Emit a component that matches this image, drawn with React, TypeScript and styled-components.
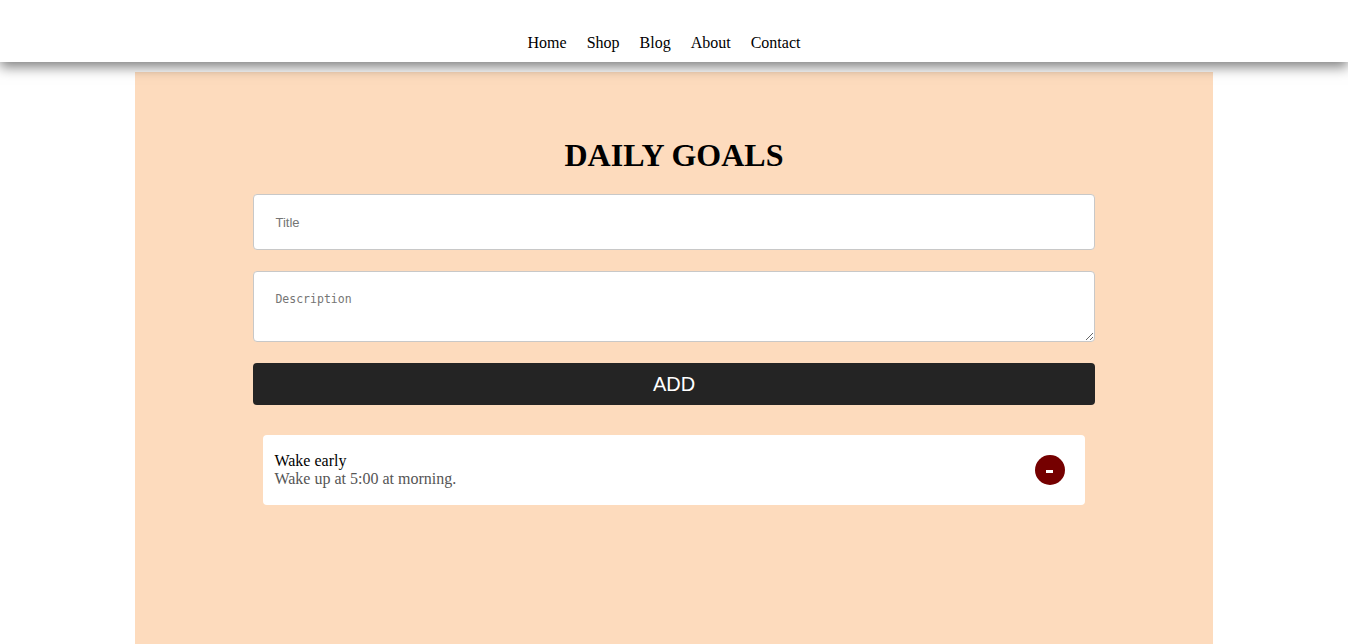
import React from "react";
import styled, { createGlobalStyle } from "styled-components";

const Global = createGlobalStyle`
  html, body { margin: 0; padding: 0; background: #fff; }
  body { font-family: "Liberation Serif", "Times New Roman", serif; font-size: 16px; }
  * { box-sizing: border-box; }
`;

const Header = styled.header`
  position: relative;
  z-index: 2;
  height: 62px;
  background: #fff;
  box-shadow: 0 5px 12px rgba(0, 0, 0, 0.5);
  display: flex;
  justify-content: center;
  padding-top: 34px;
`;

const NavList = styled.ul`
  list-style: none;
  margin: 0;
  padding: 0;
  display: flex;
  height: 18px;
  line-height: 18px;
`;

const NavItem = styled.li`
  margin-right: 20px;
  font-size: 16px;
  color: #000;
`;

const Main = styled.main`
  width: 80%;
  margin: 10px auto 0;
  background: #fddbbd;
  min-height: 572px;
  padding-top: 65px;
`;

const Title = styled.h1`
  margin: 0;
  text-align: center;
  font-size: 32px;
  line-height: 37px;
  font-weight: bold;
`;

const Form = styled.div`
  width: 78%;
  margin: 20px auto 0;
  display: flex;
  flex-direction: column;
  gap: 21px;
`;

const TextInput = styled.input`
  height: 56px;
  border: 1px solid #c8c8c8;
  border-radius: 4px;
  padding: 0 21px;
  font-family: "Liberation Sans", Arial, sans-serif;
  font-size: 13px;
  background: #fff;
  outline: none;
  &::placeholder { color: #757575; }
`;

const TextArea = styled.textarea`
  height: 71px;
  border: 1px solid #c8c8c8;
  border-radius: 4px;
  padding: 20px 21px;
  font-family: "DejaVu Sans Mono", "Liberation Mono", monospace;
  font-size: 11.5px;
  background: #fff;
  outline: none;
  &::placeholder { color: #757575; }
`;

const AddButton = styled.button`
  height: 42px;
  border: none;
  border-radius: 4px;
  background: #242424;
  color: #fff;
  font-family: "Liberation Sans", Arial, sans-serif;
  font-size: 20px;
`;

const Card = styled.div`
  margin: 9px 10px 0;
  height: 70px;
  background: #fff;
  border-radius: 4px;
  display: flex;
  align-items: center;
  justify-content: space-between;
  padding: 0 20px 0 11px;
`;

const CardText = styled.div`
  display: flex;
  flex-direction: column;
  line-height: 18px;
  font-size: 16px;
`;

const CardTitle = styled.span`
  color: #000;
`;

const CardDesc = styled.span`
  color: #555;
`;

const RemoveButton = styled.button`
  width: 30px;
  height: 30px;
  border-radius: 50%;
  border: none;
  background: #750000;
  display: flex;
  align-items: center;
  justify-content: center;
  padding: 2px 0 0;
`;

const Minus = styled.span`
  width: 7px;
  height: 3px;
  background: #fff;
`;

export default function App() {
  return (
    <>
      <Global />
      <Header>
        <NavList>
          {["Home", "Shop", "Blog", "About", "Contact"].map((n) => (
            <NavItem key={n}>{n}</NavItem>
          ))}
        </NavList>
      </Header>
      <Main>
        <Title>DAILY GOALS</Title>
        <Form>
          <TextInput placeholder="Title" />
          <TextArea placeholder="Description" />
          <AddButton>ADD</AddButton>
          <Card>
            <CardText>
              <CardTitle>Wake early</CardTitle>
              <CardDesc>Wake up at 5:00 at morning.</CardDesc>
            </CardText>
            <RemoveButton>
              <Minus />
            </RemoveButton>
          </Card>
        </Form>
      </Main>
    </>
  );
}
